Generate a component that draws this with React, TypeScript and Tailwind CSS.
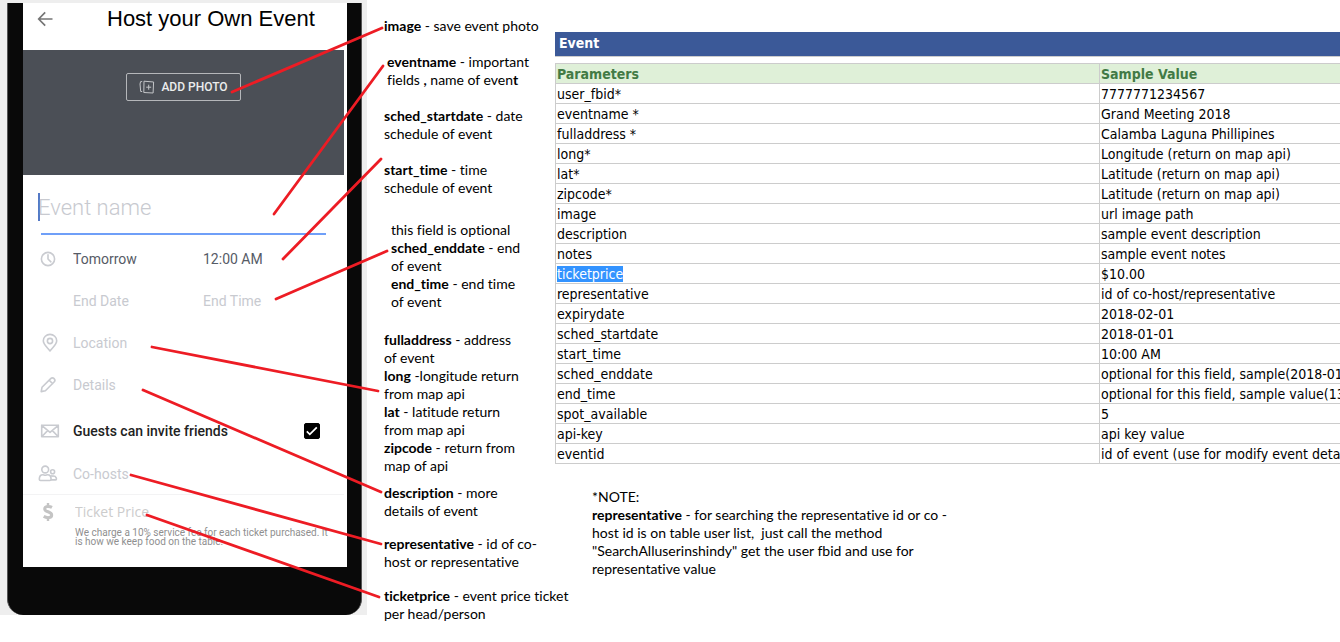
import type { ReactNode } from "react";

type NoteLine = { term?: string; text?: string };
type Note = { gap: string; lines: NoteLine[] };

const notes: Note[] = [
  { gap: "", lines: [{ term: "image", text: " - save event photo" }] },
  { gap: "mt-[18px] ml-[3px]", lines: [{ term: "eventname", text: " - important" }] },
  { gap: "mt-[18px]", lines: [{ term: "sched_startdate", text: " - date" }, { text: "schedule of event" }] },
  { gap: "mt-[18px]", lines: [{ term: "start_time", text: " - time" }, { text: "schedule of event" }] },
  {
    gap: "mt-6 ml-[7px]",
    lines: [
      { text: "this field is optional" },
      { term: "sched_enddate", text: " - end" },
      { text: "of event" },
      { term: "end_time", text: " - end time" },
      { text: "of event" },
    ],
  },
  {
    gap: "mt-5",
    lines: [
      { term: "fulladdress", text: " - address" },
      { text: "of event" },
      { term: "long", text: " -longitude return" },
      { text: "from map api" },
      { term: "lat", text: " - latitude return" },
      { text: "from map api" },
      { term: "zipcode", text: " - return from" },
      { text: "map of api" },
    ],
  },
  { gap: "mt-[9px]", lines: [{ term: "description", text: " - more" }, { text: "details of event" }] },
  { gap: "mt-[15px]", lines: [{ term: "representative", text: " - id of co-" }, { text: "host or representative" }] },
  { gap: "mt-4", lines: [{ term: "ticketprice", text: " - event price ticket" }, { text: "per head/person" }] },
];

const rows: [string, string][] = [
  ["user_fbid*", "7777771234567"],
  ["eventname *", "Grand Meeting 2018"],
  ["fulladdress *", "Calamba Laguna Phillipines"],
  ["long*", "Longitude (return on map api)"],
  ["lat*", "Latitude (return on map api)"],
  ["zipcode*", "Latitude (return on map api)"],
  ["image", "url image path"],
  ["description", "sample event description"],
  ["notes", "sample event notes"],
  ["ticketprice", "$10.00"],
  ["representative", "id of co-host/representative"],
  ["expirydate", "2018-02-01"],
  ["sched_startdate", "2018-01-01"],
  ["start_time", "10:00 AM"],
  ["sched_enddate", "optional for this field, sample(2018-01"],
  ["end_time", "optional for this field, sample value(13"],
  ["spot_available", "5"],
  ["api-key", "api key value"],
  ["eventid", "id of event (use for modify event deta"],
];

// Pointer lines from a form field to its note: x1, y1, x2, y2
const pointers = [
  [232, 92, 382, 28],
  [274, 214, 383, 66],
  [283, 259, 381, 159],
  [276, 299, 387, 251],
  [152, 347, 378, 391],
  [143, 390, 381, 492],
  [131, 475, 381, 544],
  [147, 515, 379, 597],
];

function Icon({ children }: { children: ReactNode }) {
  return (
    <svg viewBox="0 0 20 20" className="h-5 w-5 shrink-0" fill="none" stroke="#c9cbd0" strokeWidth="1.6" strokeLinecap="round" strokeLinejoin="round" aria-hidden="true">
      {children}
    </svg>
  );
}

function Field({ label, value, className = "" }: { label: string; value?: string; className?: string }) {
  return (
    <input
      type="text"
      aria-label={label}
      placeholder={label}
      defaultValue={value}
      className={`min-w-0 bg-transparent text-[#565b66] outline-none placeholder:text-[#c8cad0] placeholder:opacity-100 ${className}`}
    />
  );
}

function Phone() {
  return (
    <section className="w-[367px] shrink-0 self-start bg-[#eeeeee] pt-[3px] pr-[5px] pl-[7px]">
      <div className="rounded-b-2xl border-x border-[#555555] bg-[#090909] pr-[14px] pb-12 pl-[15px]">
        <div className="bg-white pb-[21px] font-['Roboto',sans-serif] text-sm">
          <header className="flex h-[47px] items-start pt-[3px] pl-[14px]">
            <button type="button" aria-label="Back" className="mt-1 h-[18px] w-[18px]">
              <svg viewBox="0 0 18 18" fill="none" stroke="#757575" strokeWidth="1.7" aria-hidden="true">
                <path d="M15.5 9H2M8.2 2.3 1.7 9l6.5 6.7" />
              </svg>
            </button>
            <h1 className="ml-[52px] font-['Liberation_Sans',sans-serif] text-[22px] leading-[26px] whitespace-nowrap text-black">Host your Own Event</h1>
          </header>

          <div className="mr-[3px] flex h-[125px] items-start justify-center bg-[#4b4f56] pt-[23px]">
            <button type="button" className="flex h-7 w-[115px] items-center justify-center gap-[6px] rounded-xs border border-[#b5b7ba] text-xs font-medium whitespace-nowrap text-[#eceded]">
              <svg viewBox="0 0 16 16" className="h-4 w-4 shrink-0" fill="none" stroke="#c3c5c8" strokeWidth="1" aria-hidden="true">
                <path d="M5 2.200 14.600 3l-.5 11-9.300-.5zM3.200 2.600H1.600L1 5l.7 7.500h1.500M9.700 5.700v5M7.200 8.200h5" />
              </svg>
              ADD PHOTO
            </button>
          </div>

          <div className="flex h-[63px] flex-col px-[15px] pt-[18px]">
            <div className="flex h-7 items-center shadow-[inset_2px_0_#5479c6]">
              <Field label="Event name" className="w-full pt-[2px] text-[22px] font-light" />
            </div>
            <div className="mt-3 mr-[6px] ml-[3px] h-[2px] bg-[#6f9ff8]" />
          </div>

          <div className="flex h-[42px] items-center pl-[15px]">
            <Icon>
              <circle cx="10" cy="10" r="6.600" />
              <path d="M10 5.800V10l2.900 2.800" />
            </Icon>
            <Field label="Start Date" value="Tomorrow" className="ml-[15px] w-[130px]" />
            <Field label="Start Time" value="12:00 AM" className="w-20" />
          </div>
          <div className="flex h-[42px] items-center pl-[50px]">
            <Field label="End Date" className="w-[130px]" />
            <Field label="End Time" className="w-20" />
          </div>
          <div className="flex h-[42px] items-center pl-[17px]">
            <Icon>
              <path d="M10 18C6.500 13.800 3.300 11.300 3.300 7.800a6.700 6.400 0 0 1 13.400 0c0 3.500-3.200 6-6.700 10.200Z" />
              <circle cx="10" cy="8" r="2.600" />
            </Icon>
            <Field label="Location" className="ml-[13px] w-40" />
          </div>
          <div className="flex h-[42px] items-center pl-[15px]">
            <Icon>
              <path d="m3.200 16.600.8-4.300 8.700-8.700a2.300 2.300 0 0 1 3.400 3.400l-8.700 8.700-4.200.9ZM11.200 5.200l3.400 3.400" />
            </Icon>
            <Field label="Details" className="ml-[15px] w-40" />
          </div>
          <div className="flex h-[50px] items-center pl-[17px]">
            <Icon>
              <path d="M1.700 4.300h16.600v11.400H1.700zM1.700 4.300 10 11.400l8.300-7.100M1.700 15.700l5.900-6.100M18.300 15.700l-5.900-6.100" />
            </Icon>
            <label htmlFor="invite" className="ml-[13px] flex-1 font-medium whitespace-nowrap text-[#222222]">Guests can invite friends</label>
            <span className="relative mr-[27px] flex h-4 w-4">
              <input id="invite" type="checkbox" defaultChecked className="peer h-4 w-4 appearance-none rounded-xs border border-black checked:bg-black" />
              <svg viewBox="0 0 16 16" className="pointer-events-none absolute inset-0 hidden peer-checked:block" fill="none" stroke="white" strokeWidth="1.700" aria-hidden="true">
                <path d="m2.800 8.400 3 3 7-7" />
              </svg>
            </span>
          </div>
          <div className="mr-[3px] flex h-[39px] items-center border-b border-[#f3f3f4] pb-[2px] pl-[15px]">
            <Icon>
              <circle cx="7.200" cy="5.500" r="3.400" />
              <path d="M1.300 15.300c0-3.300 2-4.600 3.600-4.600.8 0 1.400.5 2.300.5s1.500-.5 2.300-.5c1.600 0 3.600 1.300 3.600 4.600 0 .7-.5 1.200-1.200 1.200H2.500c-.7 0-1.200-.5-1.200-1.200Z" />
              <circle cx="14.600" cy="7.700" r="2" />
              <path d="M13 12.100c1-.5 1.300 0 1.900 0s2.300-.5 3.300 1.700c.4 1 .3 2.100-.7 2.100h-4" />
            </Icon>
            <Field label="Co-hosts" className="ml-[15px] w-40" />
          </div>
          <div className="flex items-start pt-[7px] pl-[15px]">
            <svg viewBox="0 0 20 20" className="h-5 w-5 shrink-0" fill="none" stroke="#c4c4c4" aria-hidden="true">
              <path d="M10 1v3M10 16v3" strokeWidth="2.400" />
              <path d="M14 5.400C11.500 4 6.700 3.700 6.700 6.900c0 3.400 7 2.300 7 6 0 3.500-5 3.200-8 1.500" strokeWidth="3" />
            </svg>
            <div className="ml-[17px]">
              <Field label="Ticket Price" className="block h-5 w-40 font-['Open_Sans',sans-serif] placeholder:text-[#cccccc]" />
              <p className="mt-[6px] text-[10px] leading-[9px] whitespace-nowrap text-[#8f8f8f]">
                We charge a 10% service fee for each ticket purchased. It
                <br />
                is how we keep food on the table.
              </p>
            </div>
          </div>
        </div>
      </div>
    </section>
  );
}

function Notes() {
  return (
    <section className="w-[188px] shrink-0 pt-[17px] pl-[17px] whitespace-pre">
      {notes.map((note, i) => (
        <p key={i} className={note.gap}>
          {note.lines.map((line, j) => (
            <span key={j} className="block">
              {line.term && <b>{line.term}</b>}
              {line.text}
            </span>
          ))}
          {i === 1 && (
            <span className="block">
              fields <b>,</b> name of even<b>t</b>
            </span>
          )}
        </p>
      ))}
    </section>
  );
}

function Reference() {
  return (
    <section className="min-w-0 flex-1 pt-8">
      <div className="overflow-hidden font-['DejaVu_Sans_Condensed','Open_Sans',sans-serif]">
        <h2 className="h-[25px] border-b border-[#cccccc] bg-[#3b5998] pl-1 leading-[23px] font-bold text-white">Event</h2>
        <table className="mt-[6px] w-full table-fixed border-collapse whitespace-nowrap">
          <thead>
            <tr className="h-5 bg-[#dff0d8] text-left text-[#427a45]">
              <th className="w-[544px] border border-[#cccccc] px-px pt-[2px] pb-0 leading-[17px]">Parameters</th>
              <th className="border border-r-0 border-[#cccccc] px-px pt-[2px] pb-0 leading-[17px]">Sample Value</th>
            </tr>
          </thead>
          <tbody>
            {rows.map(([name, value]) => (
              <tr key={name} className="h-5">
                <td className="border border-[#cccccc] px-px pt-[2px] pb-0 leading-[17px]">
                  {name === "ticketprice" ? <mark className="bg-[#3393ff] text-white">{name}</mark> : name}
                </td>
                <td className="border border-r-0 border-[#cccccc] px-px pt-[2px] pb-0 leading-[17px]">{value}</td>
              </tr>
            ))}
          </tbody>
        </table>
      </div>
      <div className="mt-6 pl-[37px] whitespace-pre">
        <p>*NOTE:</p>
        <p>
          <b>representative</b> - for searching the representative id or co -
          {"\nhost id is on table user list,  just call the method\n\"SearchAlluserinshindy\" get the user fbid and use for\nrepresentative value"}
        </p>
      </div>
    </section>
  );
}

export default function App() {
  return (
    <main className="relative flex min-h-screen overflow-hidden bg-white font-['Lato',sans-serif] text-sm leading-[18px] text-black [font-variant-ligatures:none]">
      <Phone />
      <Notes />
      <Reference />
      <svg className="pointer-events-none absolute top-0 left-0 h-[642px] w-[400px]" viewBox="0 0 400 642" stroke="#ed1c24" strokeWidth="2.800" strokeLinecap="round" aria-hidden="true">
        {pointers.map(([x1, y1, x2, y2]) => (
          <line key={y1} x1={x1} y1={y1} x2={x2} y2={y2} />
        ))}
      </svg>
    </main>
  );
}
